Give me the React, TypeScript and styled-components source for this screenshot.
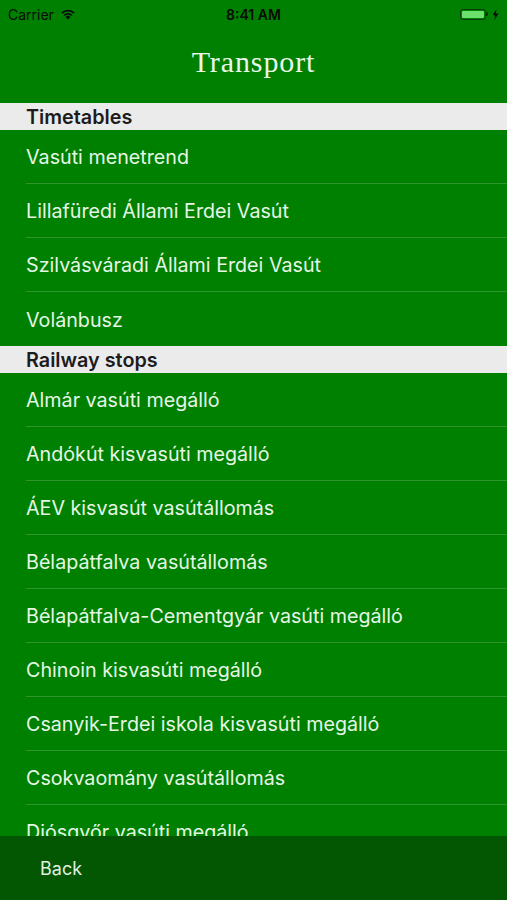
import React from "react";
import styled, { createGlobalStyle } from "styled-components";

const Global = createGlobalStyle`
  html, body { margin: 0; padding: 0; background: #008000; }
  body { font-family: Inter, "Noto Sans", sans-serif; }
  #root { height: 900px; }
`;

const Screen = styled.div`
  width: 507px;
  height: 900px;
  display: flex;
  flex-direction: column;
  background: #008000;
  overflow: hidden;
`;

const Top = styled.header`
  height: 103px;
  display: flex;
  flex-direction: column;
  flex-shrink: 0;
`;

const StatusBar = styled.div`
  height: 28px;
  display: grid;
  grid-template-columns: 1fr auto 1fr;
  align-items: center;
  padding: 0 8px;
  color: #0a0a0a;
  font-family: Inter, sans-serif;
  font-size: 14px;
`;

const StatusLeft = styled.div`
  display: flex;
  align-items: center;
  gap: 6px;
`;

const Time = styled.div`
  font-weight: 600;
  font-size: 14px;
`;

const StatusRight = styled.div`
  display: flex;
  justify-content: flex-end;
  align-items: center;
  gap: 4px;
`;

const BatteryWrap = styled.div`
  display: flex;
  align-items: center;
`;

const Battery = styled.div`
  width: 26px;
  height: 11px;
  border: 1.5px solid #0b3d0b;
  border-radius: 3px;
  padding: 1px;
  box-sizing: border-box;
  display: flex;
  &::after {
    content: "";
    flex: 1;
    background: #6be06b;
    border-radius: 1px;
  }
`;

const Nub = styled.div`
  width: 2px;
  height: 4px;
  background: #0b3d0b;
  border-radius: 0 1px 1px 0;
`;

const NavTitle = styled.h1`
  flex: 1;
  margin: 0;
  display: flex;
  align-items: center;
  justify-content: center;
  padding-bottom: 8px;
  font-family: "Liberation Serif", "DejaVu Serif", serif;
  font-weight: 400;
  font-size: 30px;
  letter-spacing: 0.9px;
  color: #eaf6ea;
`;

const List = styled.main`
  flex: 1;
  overflow: hidden;
  display: flex;
  flex-direction: column;
`;

const SectionHeader = styled.div`
  height: 27px;
  flex-shrink: 0;
  background: #ebebeb;
  display: flex;
  align-items: center;
  padding-left: 26px;
  font-family: Inter, sans-serif;
  font-weight: 600;
  font-size: 19.8px;
  color: #1c1c1c;
`;

const Row = styled.div<{ $last?: boolean }>`
  height: 54px;
  flex-shrink: 0;
  box-sizing: border-box;
  margin-left: 26px;
  padding-top: 1px;
  display: flex;
  align-items: center;
  border-bottom: ${(p) => (p.$last ? "none" : "1px solid #2f952f")};
  font-family: Inter, sans-serif;
  font-size: 19.7px;
  color: #e6f6e6;
`;

const BottomBar = styled.footer`
  height: 64px;
  flex-shrink: 0;
  background: #035703;
  display: flex;
  align-items: center;
  padding-left: 40px;
  font-family: Inter, sans-serif;
  font-size: 18px;
  color: #e0efe0;
`;

const Wifi = () => (
  <svg width="16" height="12" viewBox="0 0 16 12">
    <path d="M8 11.5 L5.6 8.9 A3.4 3.4 0 0 1 10.4 8.9 Z" fill="#0a0a0a" />
    <path d="M3.6 6.9 A6.2 6.2 0 0 1 12.4 6.9 L11.2 8.1 A4.5 4.5 0 0 0 4.8 8.1 Z" fill="#0a0a0a" />
    <path d="M1.3 4.6 A9.4 9.4 0 0 1 14.7 4.6 L13.5 5.8 A7.7 7.7 0 0 0 2.5 5.8 Z" fill="#0a0a0a" />
  </svg>
);

const Bolt = () => (
  <svg width="7" height="11" viewBox="0 0 7 11">
    <path d="M4.5 0 L0.5 6.2 H3.2 L2.4 11 L6.5 4.6 H3.8 Z" fill="#0a0a0a" />
  </svg>
);

const timetables = [
  "Vasúti menetrend",
  "Lillafüredi Állami Erdei Vasút",
  "Szilvásváradi Állami Erdei Vasút",
  "Volánbusz",
];

const stops = [
  "Almár vasúti megálló",
  "Andókút kisvasúti megálló",
  "ÁEV kisvasút vasútállomás",
  "Bélapátfalva vasútállomás",
  "Bélapátfalva-Cementgyár vasúti megálló",
  "Chinoin kisvasúti megálló",
  "Csanyik-Erdei iskola kisvasúti megálló",
  "Csokvaomány vasútállomás",
  "Diósgyőr vasúti megálló",
];

export default function App() {
  return (
    <>
      <Global />
      <Screen>
        <Top>
          <StatusBar>
            <StatusLeft>
              <span>Carrier</span>
              <Wifi />
            </StatusLeft>
            <Time>8:41 AM</Time>
            <StatusRight>
              <BatteryWrap>
                <Battery />
                <Nub />
              </BatteryWrap>
              <Bolt />
            </StatusRight>
          </StatusBar>
          <NavTitle>Transport</NavTitle>
        </Top>
        <List>
          <SectionHeader>Timetables</SectionHeader>
          {timetables.map((t, i) => (
            <Row key={t} $last={i === timetables.length - 1}>
              {t}
            </Row>
          ))}
          <SectionHeader>Railway stops</SectionHeader>
          {stops.map((t) => (
            <Row key={t}>{t}</Row>
          ))}
        </List>
        <BottomBar>Back</BottomBar>
      </Screen>
    </>
  );
}
